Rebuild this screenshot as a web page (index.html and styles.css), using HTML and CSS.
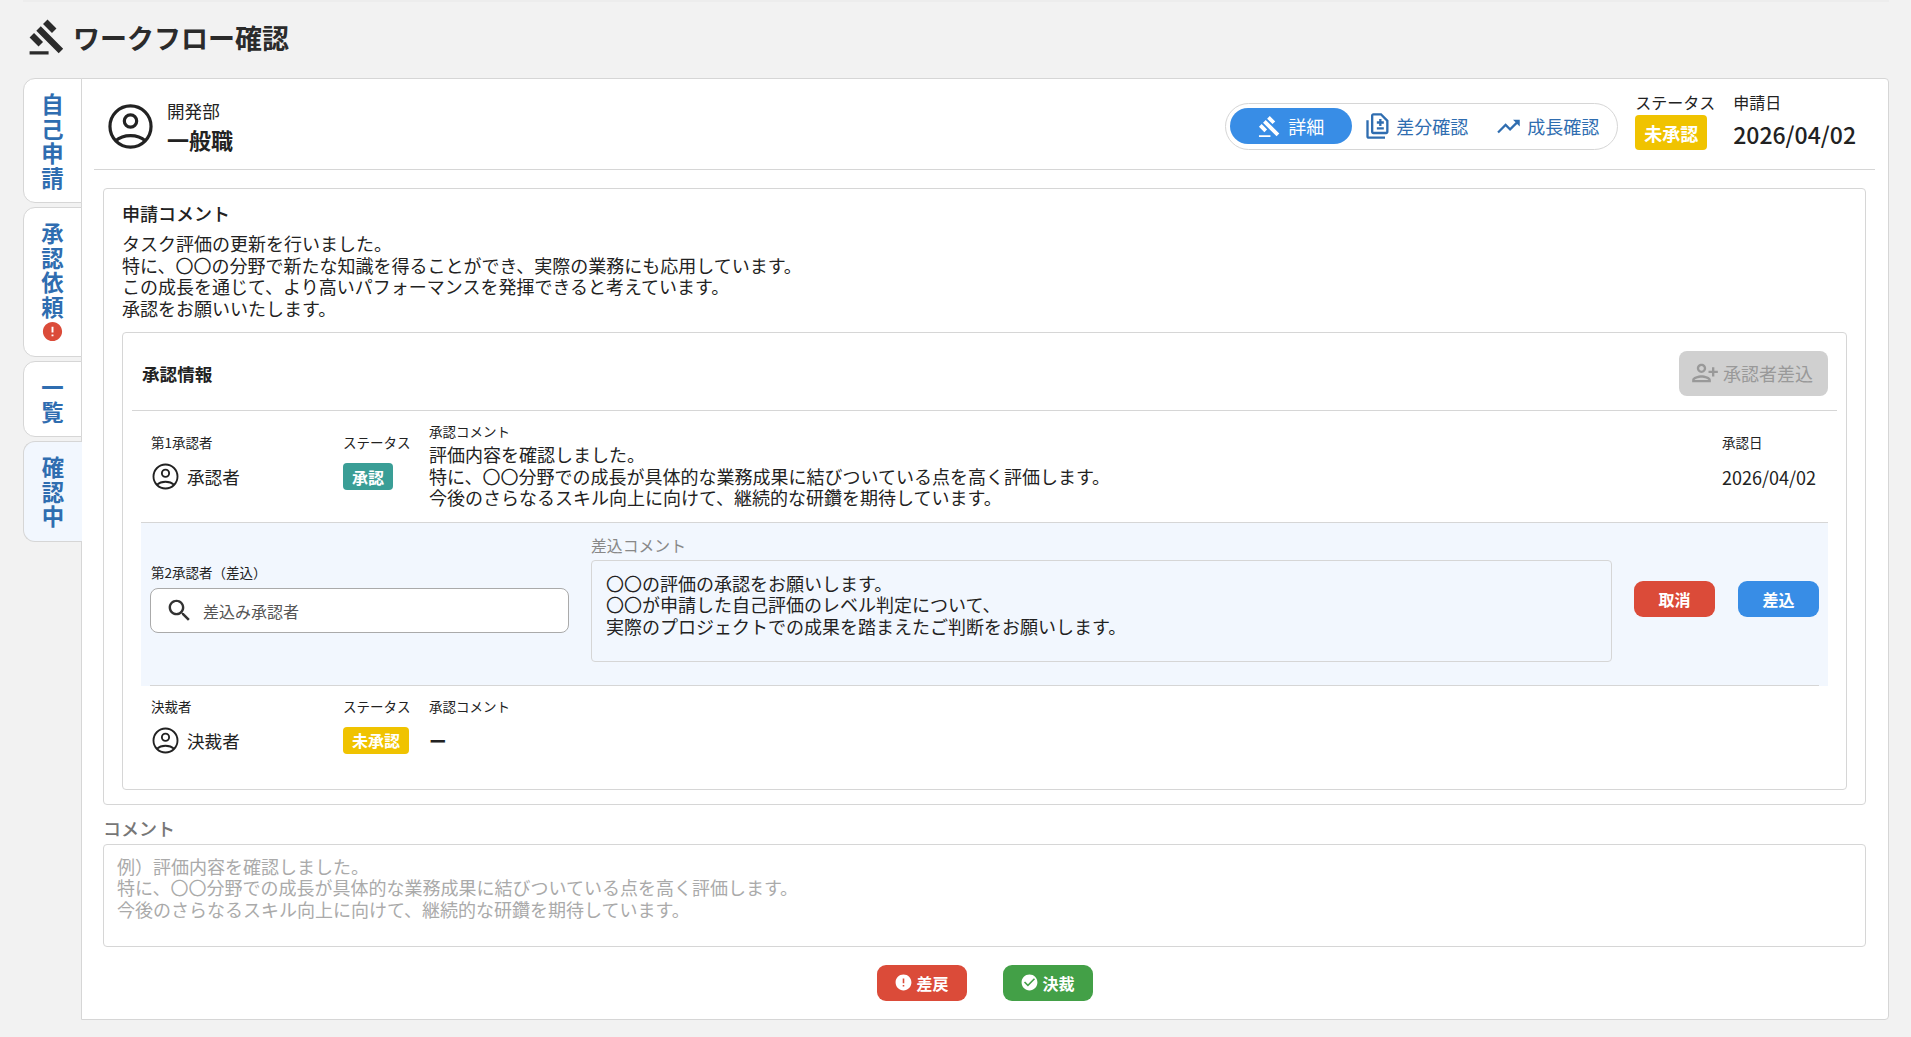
FILE: index.html
```html
<!DOCTYPE html>
<html lang="ja">
<head>
	<meta charset="utf-8">
	<title>ワークフロー確認</title>
	<link rel="stylesheet" href="styles.css">
</head>
<body>
<svg class="defs" width="0" height="0">
	<symbol id="i-gavel" viewBox="0 0 24 24"><path d="M1 21h12v2H1zM5.245 8.07l2.83-2.827 14.14 14.142-2.828 2.828zM12.317 1l5.657 5.656-2.83 2.83-5.654-5.66zM3.825 9.485l5.657 5.657-2.828 2.828-5.657-5.657z"/></symbol>
	<symbol id="i-person" viewBox="0 0 24 24"><g fill="none" stroke="currentColor" stroke-width="1.45"><circle cx="12" cy="12" r="9.3"/><circle cx="12" cy="9.5" r="2.8"/><path d="M5.2 18.5C7 16.9 9.3 16.1 12 16.1s5 .8 6.8 2.4"/></g></symbol>
	<symbol id="i-diff" viewBox="0 0 24 24"><path d="M18 23H4c-1.1 0-2-.9-2-2V7h2v14h14v2zM15 1H8c-1.1 0-1.99.9-1.99 2L6 17c0 1.1.89 2 1.99 2H19c1.1 0 2-.9 2-2V7l-6-6zm4 16H8V3h6.17L19 7.83V17zm-8-2h6v-2h-6v2zm0-5h2v2h2v-2h2V8h-2V6h-2v2h-2v2z"/></symbol>
	<symbol id="i-trend" viewBox="0 0 24 24"><path d="M16 6l2.29 2.29-4.88 4.88-4-4L2 16.59 3.41 18l6-6 4 4 6.3-6.29L22 12V6z"/></symbol>
	<symbol id="i-add" viewBox="0 0 24 24"><path d="M13 8c0-2.21-1.79-4-4-4S5 5.79 5 8s1.79 4 4 4 4-1.79 4-4zm-2 0c0 1.1-.9 2-2 2s-2-.9-2-2 .9-2 2-2 2 .9 2 2zM1 18v2h16v-2c0-2.66-5.33-4-8-4s-8 1.34-8 4zm2 0c.2-.71 3.3-2 6-2 2.69 0 5.78 1.28 6 2H3zm17-3v-3h3v-2h-3V7h-2v3h-3v2h3v3h2z"/></symbol>
	<symbol id="i-search" viewBox="0 0 24 24"><path d="M15.5 14h-.79l-.28-.27C15.41 12.59 16 11.11 16 9.5 16 5.91 13.09 3 9.5 3S3 5.91 3 9.5 5.91 16 9.5 16c1.61 0 3.09-.59 4.23-1.57l.27.28v.79l5 4.99L20.49 19l-4.99-5zm-6 0C7.01 14 5 11.99 5 9.5S7.01 5 9.5 5 14 7.01 14 9.5 11.99 14 9.5 14z"/></symbol>
	<symbol id="i-error" viewBox="0 0 24 24"><path d="M12 2C6.48 2 2 6.48 2 12s4.48 10 10 10 10-4.48 10-10S17.52 2 12 2zm1 15h-2v-2h2v2zm0-4h-2V7h2v6z"/></symbol>
	<symbol id="i-check" viewBox="0 0 24 24"><path d="M12 2C6.48 2 2 6.48 2 12s4.48 10 10 10 10-4.48 10-10S17.52 2 12 2zm-2 15l-5-5 1.41-1.41L10 14.17l7.59-7.59L19 8l-9 9z"/></symbol>
</svg>

<div class="page">
	<h1 class="page-title"><svg class="title-icon"><use href="#i-gavel"/></svg>ワークフロー確認</h1>

	<div class="main">
		<ul class="tabs">
			<li class="tab"><span class="tab-text">自己申請</span></li>
			<li class="tab"><span class="tab-text">承認依頼</span><svg class="tab-alert"><use href="#i-error"/></svg></li>
			<li class="tab"><span class="tab-text">一覧</span></li>
			<li class="tab active"><span class="tab-text">確認中</span></li>
		</ul>

		<div class="card">
			<div class="card-head">
				<svg class="user-icon"><use href="#i-person"/></svg>
				<div class="user-text">
					<div class="user-dept">開発部</div>
					<div class="user-role">一般職</div>
				</div>
				<div class="switch">
					<div class="switch-item on"><svg class="sw-gavel"><use href="#i-gavel"/></svg>詳細</div>
					<div class="switch-item diff"><svg class="sw-diff"><use href="#i-diff"/></svg>差分確認</div>
					<div class="switch-item trend"><svg class="sw-trend"><use href="#i-trend"/></svg>成長確認</div>
				</div>
				<div class="meta">
					<div class="meta-col">
						<div class="meta-label">ステータス</div>
						<span class="badge big yellow">未承認</span>
					</div>
					<div class="meta-col">
						<div class="meta-label">申請日</div>
						<div class="meta-date">2026/04/02</div>
					</div>
				</div>
			</div>

			<div class="request">
				<div class="request-title">申請コメント</div>
				<div class="text">タスク評価の更新を行いました。<br>特に、〇〇の分野で新たな知識を得ることができ、実際の業務にも応用しています。<br>この成長を通じて、より高いパフォーマンスを発揮できると考えています。<br>承認をお願いいたします。</div>

				<div class="approval">
					<div class="approval-head">
						<div class="approval-title">承認情報</div>
						<div class="btn-add"><svg class="add-icon"><use href="#i-add"/></svg>承認者差込</div>
					</div>

					<div class="rows">
						<div class="row first">
							<div class="col pad">
								<div class="label">第1承認者</div>
								<div class="value"><svg class="person-icon"><use href="#i-person"/></svg>承認者</div>
							</div>
							<div class="col pad">
								<div class="label">ステータス</div>
								<div class="value"><span class="badge green">承認</span></div>
							</div>
							<div class="col">
								<div class="label">承認コメント</div>
								<div class="text row-comment">評価内容を確認しました。<br>特に、〇〇分野での成長が具体的な業務成果に結びついている点を高く評価します。<br>今後のさらなるスキル向上に向けて、継続的な研鑽を期待しています。</div>
							</div>
							<div class="col pad">
								<div class="label">承認日</div>
								<div class="value date">2026/04/02</div>
							</div>
						</div>

						<div class="remand">
							<div class="remand-body">
								<div class="remand-user">
									<div class="label">第2承認者（差込）</div>
									<div class="search"><svg class="search-icon"><use href="#i-search"/></svg>差込み承認者</div>
								</div>
								<div class="remand-comment">
									<div class="remand-label">差込コメント</div>
									<div class="remand-box text">〇〇の評価の承認をお願いします。<br>〇〇が申請した自己評価のレベル判定について、<br>実際のプロジェクトでの成果を踏まえたご判断をお願いします。</div>
								</div>
								<div class="remand-btns">
									<div class="btn red small">取消</div>
									<div class="btn blue small">差込</div>
								</div>
							</div>
							<div class="remand-line"></div>
						</div>

						<div class="row last">
							<div class="col">
								<div class="label">決裁者</div>
								<div class="value"><svg class="person-icon"><use href="#i-person"/></svg>決裁者</div>
							</div>
							<div class="col">
								<div class="label">ステータス</div>
								<div class="value"><span class="badge yellow">未承認</span></div>
							</div>
							<div class="col">
								<div class="label">承認コメント</div>
								<div class="value dash">ー</div>
							</div>
						</div>
					</div>
				</div>
			</div>

			<div class="comment">
				<div class="comment-label">コメント</div>
				<div class="comment-box text">例）評価内容を確認しました。<br>特に、〇〇分野での成長が具体的な業務成果に結びついている点を高く評価します。<br>今後のさらなるスキル向上に向けて、継続的な研鑽を期待しています。</div>
			</div>

			<div class="actions">
				<div class="btn red"><svg class="btn-icon"><use href="#i-error"/></svg>差戻</div>
				<div class="btn green"><svg class="btn-icon"><use href="#i-check"/></svg>決裁</div>
			</div>
		</div>
	</div>
</div>
</body>
</html>
```

FILE: styles.css
```css
*{margin: 0;padding: 0;box-sizing: border-box;}
ul{list-style: none;}
svg{display: block;flex: none;fill: currentColor;}
.defs{position: absolute;}
body{background-color: #f2f2f2;color: #222;font-family: "Noto Sans CJK JP", "Noto Sans", sans-serif;font-size: 17.6px;}

.page{padding: 0 22px 18px 23px;}
.page-title{height: 78px;padding: 0 0 6px 5px;border-top: 2px solid #ededed;display: flex;align-items: center;gap: 7px;font-size: 27px;font-weight: 700;color: #2b2b2b;}
.title-icon{width: 38px;height: 38px;}

.main{display: flex;align-items: flex-start;}

/* left tabs */
.tabs{width: 59px;margin-right: -1px;display: flex;flex-direction: column;gap: 4px;position: relative;z-index: 1;flex: none;}
.tab{padding: 12px 0 13px;background-color: #fff;border: 1px solid #d6d6d6;border-radius: 12px 0 0 12px;display: flex;flex-direction: column;align-items: center;color: #2f6db0;}
.tab.active{background-color: #f2f7fe;border-right: 0;}
.tab-text{width: 1em;font-size: 22.4px;line-height: 24.5px;font-weight: 700;word-break: break-all;}
.tab-alert{width: 23px;height: 23px;margin-top: 2px;color: #db4b39;}

.card{flex: 1;background-color: #fff;border: 1px solid #d6d6d6;border-radius: 0 4px 4px 0;padding-bottom: 18px;}

/* header of card */
.card-head{height: 91px;margin: 0 13px 0 12px;padding: 4px 19px 0 10px;border-bottom: 1px solid #d6d6d6;display: flex;align-items: center;}
.user-icon{width: 53px;height: 53px;}
.user-text{margin-left: 10px;padding-top: 3px;flex: 1;}
.user-dept{line-height: 21px;}
.user-role{margin-top: 2px;font-size: 22px;line-height: 32px;font-weight: 700;}

.switch{width: 393px;height: 47px;padding: 4px;border: 1px solid #d6d6d6;border-radius: 24px;display: flex;align-items: center;color: #2f6db0;font-size: 18px;}
.switch-item{display: flex;align-items: center;}
.switch-item.on{width: 122px;height: 36px;justify-content: center;gap: 7px;border-radius: 18px;background-color: #388de6;color: #fff;}
.switch-item.diff{margin-left: 12px;gap: 4px;}
.switch-item.trend{margin-left: 27px;gap: 5px;}
.sw-gavel{width: 23px;height: 23px;}
.sw-diff{width: 28px;height: 28px;}
.sw-trend{width: 27px;height: 27px;}

.meta{margin-left: 17px;padding-top: 9px;align-self: flex-start;display: flex;gap: 18px;}
.meta-col{min-width: 80px;}
.meta-label{font-size: 16px;line-height: 20px;}
.meta-date{margin-top: 5px;font-size: 23px;line-height: 34px;font-weight: 500;}

.badge{display: inline-flex;align-items: center;height: 27px;padding: 0 9px;border-radius: 4px;color: #fff;font-size: 16px;font-weight: 700;}
.badge.big{height: 35px;margin-top: 3px;font-size: 18px;}
.badge.yellow{background-color: #f0c300;}
.badge.green{background-color: #3a9e96;}

/* request comment */
.request{margin: 18px 22px 0 21px;padding: 14px 18px 14px;border: 1px solid #d6d6d6;border-radius: 4px;}
.request-title{margin-bottom: 9px;font-size: 18px;line-height: 21px;font-weight: 500;}
.text{font-size: 18px;line-height: 21.5px;}

.approval{margin-top: 13px;border: 1px solid #d6d6d6;border-radius: 4px;padding-bottom: 35px;}
.approval-head{height: 78px;margin: 0 9px;padding: 3px 9px 0 10px;border-bottom: 1px solid #d6d6d6;display: flex;align-items: center;justify-content: space-between;}
.approval-title{font-weight: 700;}
.btn-add{width: 149px;height: 45px;padding-left: 12px;border-radius: 8px;background-color: #d0d0d0;color: #999;font-size: 18px;display: flex;align-items: center;gap: 4px;}
.add-icon{width: 28px;height: 28px;}

.rows{margin: 0 18px;}
.row{padding-left: 10px;display: grid;grid-template-columns: 192px 86px 1fr 106px;}
.row.first{padding-top: 12px;padding-bottom: 13px;border-bottom: 1px solid #d6d6d6;}
.row.last{padding-top: 12px;}
.pad{padding-top: 11px;}
.label{font-size: 13.5px;line-height: 16px;}
.value{min-height: 27px;margin-top: 13px;display: flex;align-items: center;gap: 6px;}
.value.date{font-size: 18px;}
.person-icon{width: 31px;height: 31px;margin: -2px 0 -2px -1px;}
.row-comment{margin-top: 5px;}
.dash{font-weight: 700;}

/* remand row */
.remand{background-color: #f2f7fe;}
.remand-body{padding: 13px 9px 23px;display: flex;align-items: center;gap: 22px;}
.remand-user{width: 419px;flex: none;padding-left: 1px;}
.search{height: 45px;margin: 8px 0 0 -1px;padding-left: 14px;border: 1px solid #aaa;border-radius: 8px;background-color: #fff;color: #555;font-size: 16px;display: flex;align-items: center;gap: 9px;}
.search-icon{width: 29px;height: 29px;color: #333;}
.remand-comment{flex: 1;}
.remand-label{margin-bottom: 4px;color: #888;font-size: 15.84px;line-height: 20px;}
.remand-box{height: 102px;padding: 12px 14px;border: 1px solid #d6d6d6;border-radius: 4px;}
.remand-btns{display: flex;gap: 23px;}
.remand-line{height: 1px;margin: 0 9px;background-color: #d6d6d6;}

.btn{height: 36px;border-radius: 9px;color: #fff;font-size: 16px;font-weight: 700;display: flex;align-items: center;justify-content: center;gap: 3px;}
.btn.small{width: 81px;}
.btn.red{background-color: #db4b39;}
.btn.blue{background-color: #388de6;}
.btn.green{background-color: #43a047;}
.btn-icon{width: 19px;height: 19px;}

/* comment input */
.comment{margin: 13px 22px 0 21px;}
.comment-label{margin-bottom: 5px;color: #777;font-size: 18px;line-height: 21px;font-weight: 500;}
.comment-box{height: 103px;padding: 11px 13px;border: 1px solid #d6d6d6;border-radius: 4px;color: #aaa;}

.actions{margin-top: 18px;padding-right: 1px;display: flex;justify-content: center;gap: 36px;}
.actions .btn{width: 90px;}
```
